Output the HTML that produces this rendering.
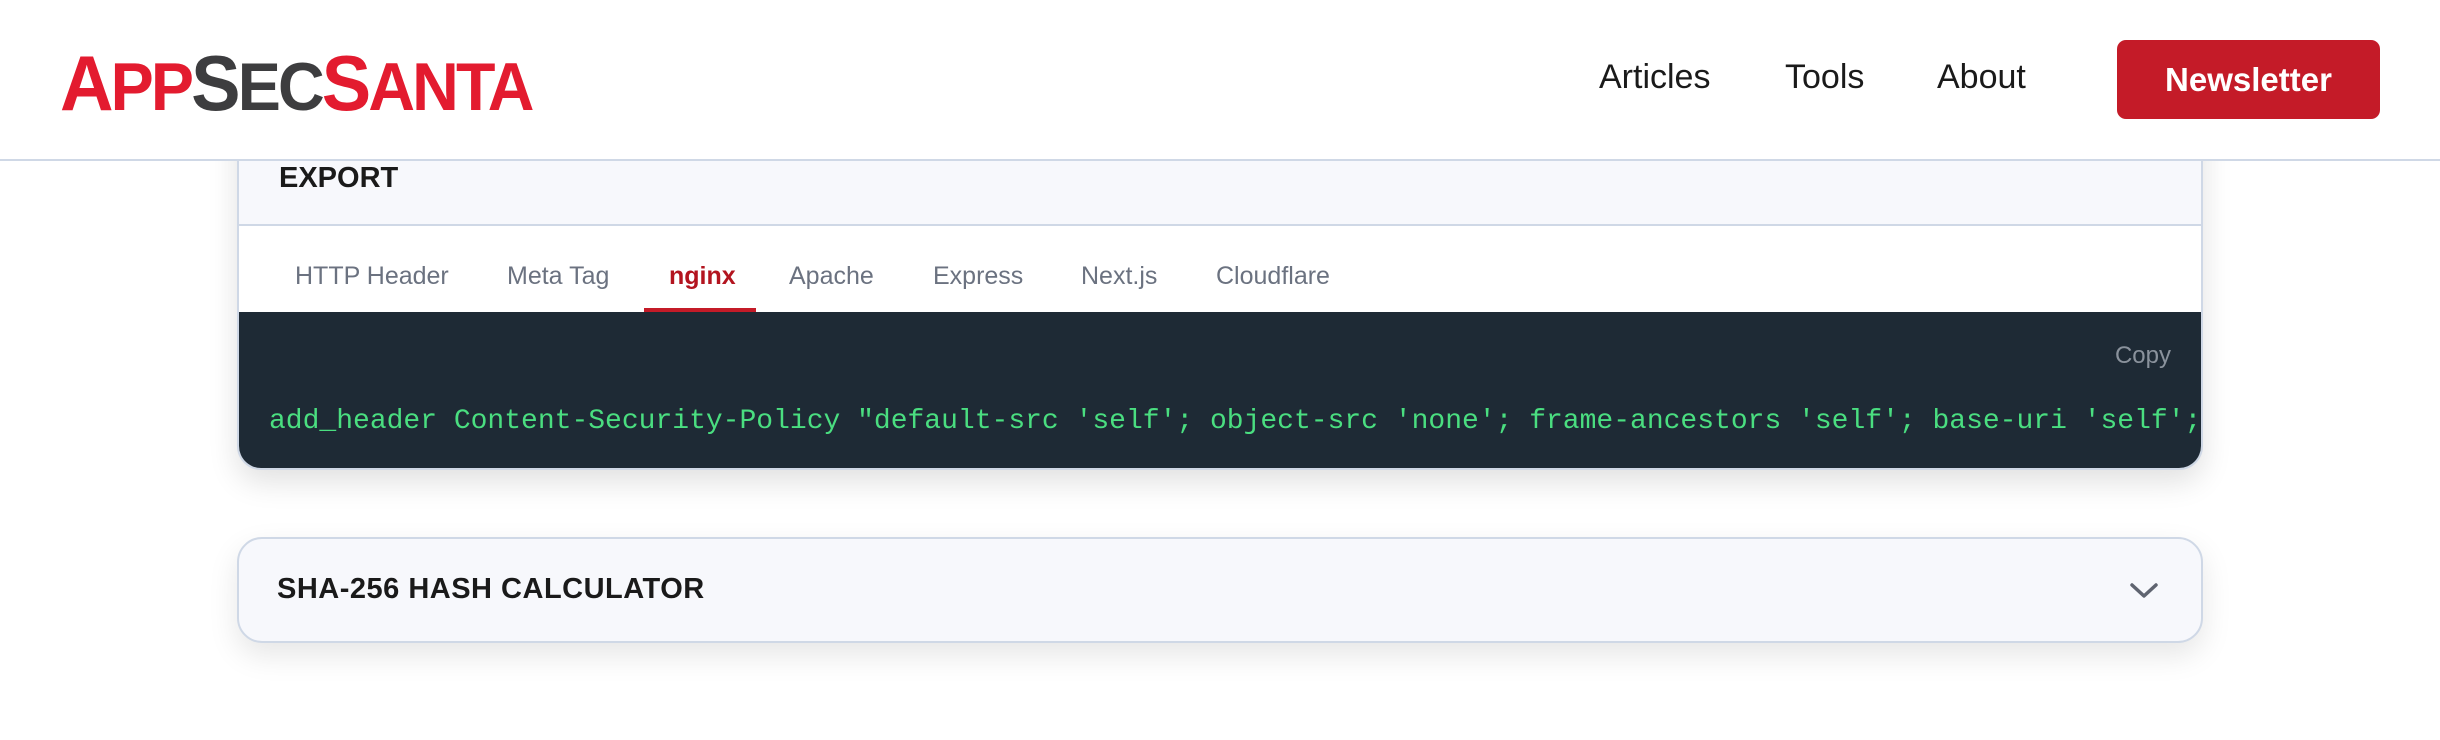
<!DOCTYPE html>
<html><head><meta charset="utf-8"><style>
*{margin:0;padding:0;box-sizing:border-box}
body{width:2440px;height:740px;background:#fff;position:relative;overflow:hidden;font-family:"Liberation Sans",sans-serif}
.card1{position:absolute;left:237px;top:100px;width:1966px;height:370px;border:2px solid #cfd8e6;border-radius:0 0 24px 24px;box-shadow:0 12px 30px rgba(0,0,0,0.12);overflow:hidden;background:#fff}
.h1{position:absolute;left:0;top:0;right:0;height:124px;background:#f7f8fc;border-bottom:2px solid #cfd8e6}
.h1 span{position:absolute;left:40px;top:60px;font-size:29px;font-weight:bold;color:#1a1a1a}
.tabs{position:absolute;left:0;right:0;top:124px;height:88px;background:#fff}
.tab{position:absolute;top:36px;font-size:25px;color:#6b7280}
.ul{position:absolute;left:405px;top:82px;width:112px;height:4px;background:#c41b28}
.code{position:absolute;left:0;right:0;top:210px;bottom:0;background:#1e2a35}
.copy{position:absolute;right:30px;top:30px;font-size:24px;color:#8a929c}
.txt{position:absolute;left:30px;top:94px;white-space:pre;font-family:"Liberation Mono",monospace;font-size:28px;color:#4ade80;letter-spacing:0}
.card2{position:absolute;left:237px;top:537px;width:1966px;height:106px;border:2px solid #cfd8e6;border-radius:25px;background:#f7f8fc;box-shadow:0 12px 30px rgba(0,0,0,0.10)}
.card2 span{position:absolute;left:38px;top:34px;font-size:29px;font-weight:bold;color:#1a1a1a;letter-spacing:0.5px}
header{position:absolute;left:0;top:0;width:2440px;height:161px;background:#fff;border-bottom:2px solid #cfd8e6}
.logo{position:absolute;left:60px;top:44px;font-weight:900;font-size:68px;letter-spacing:-3px;transform:scaleX(0.95);transform-origin:left;line-height:1;white-space:nowrap}
.logo .b{font-size:78px}
.r{color:#e31b2f}.d{color:#3d3d3f}
.nav{position:absolute;top:58px;font-size:34px;color:#1a1a1a}
.btn{position:absolute;left:2117px;top:40px;width:263px;height:79px;background:#c41b28;border-radius:9px;color:#fff;font-weight:bold;font-size:33px;text-align:center;line-height:79px}
</style></head><body>
<div class="card1">
 <div class="h1"><span>EXPORT</span></div>
 <div class="tabs">
  <div class="tab" style="left:56px">HTTP Header</div>
  <div class="tab" style="left:268px">Meta Tag</div>
  <div class="tab" style="left:430px;color:#b3141f;font-weight:bold">nginx</div>
  <div class="tab" style="left:550px">Apache</div>
  <div class="tab" style="left:694px">Express</div>
  <div class="tab" style="left:842px">Next.js</div>
  <div class="tab" style="left:977px">Cloudflare</div>
  <div class="ul"></div>
 </div>
 <div class="code"><div class="copy">Copy</div><div class="txt">add_header Content-Security-Policy "default-src 'self'; object-src 'none'; frame-ancestors 'self'; base-uri 'self';</div></div>
</div>
<div class="card2"><span>SHA-256 HASH CALCULATOR</span>
<svg style="position:absolute;left:1891px;top:44px" width="28" height="16" viewBox="0 0 28 16"><path d="M2 2 L14 13 L26 2" fill="none" stroke="#5f6470" stroke-width="3.5" stroke-linecap="round" stroke-linejoin="round"/></svg>
</div>
<header>
 <div class="logo"><span class="r b">A</span><span class="r">PP</span><span class="d b">S</span><span class="d">EC</span><span class="r b">S</span><span class="r">ANTA</span></div>
 <div class="nav" style="left:1599px">Articles</div>
 <div class="nav" style="left:1785px">Tools</div>
 <div class="nav" style="left:1937px">About</div>
 <div class="btn">Newsletter</div>
</header>
</body></html>
